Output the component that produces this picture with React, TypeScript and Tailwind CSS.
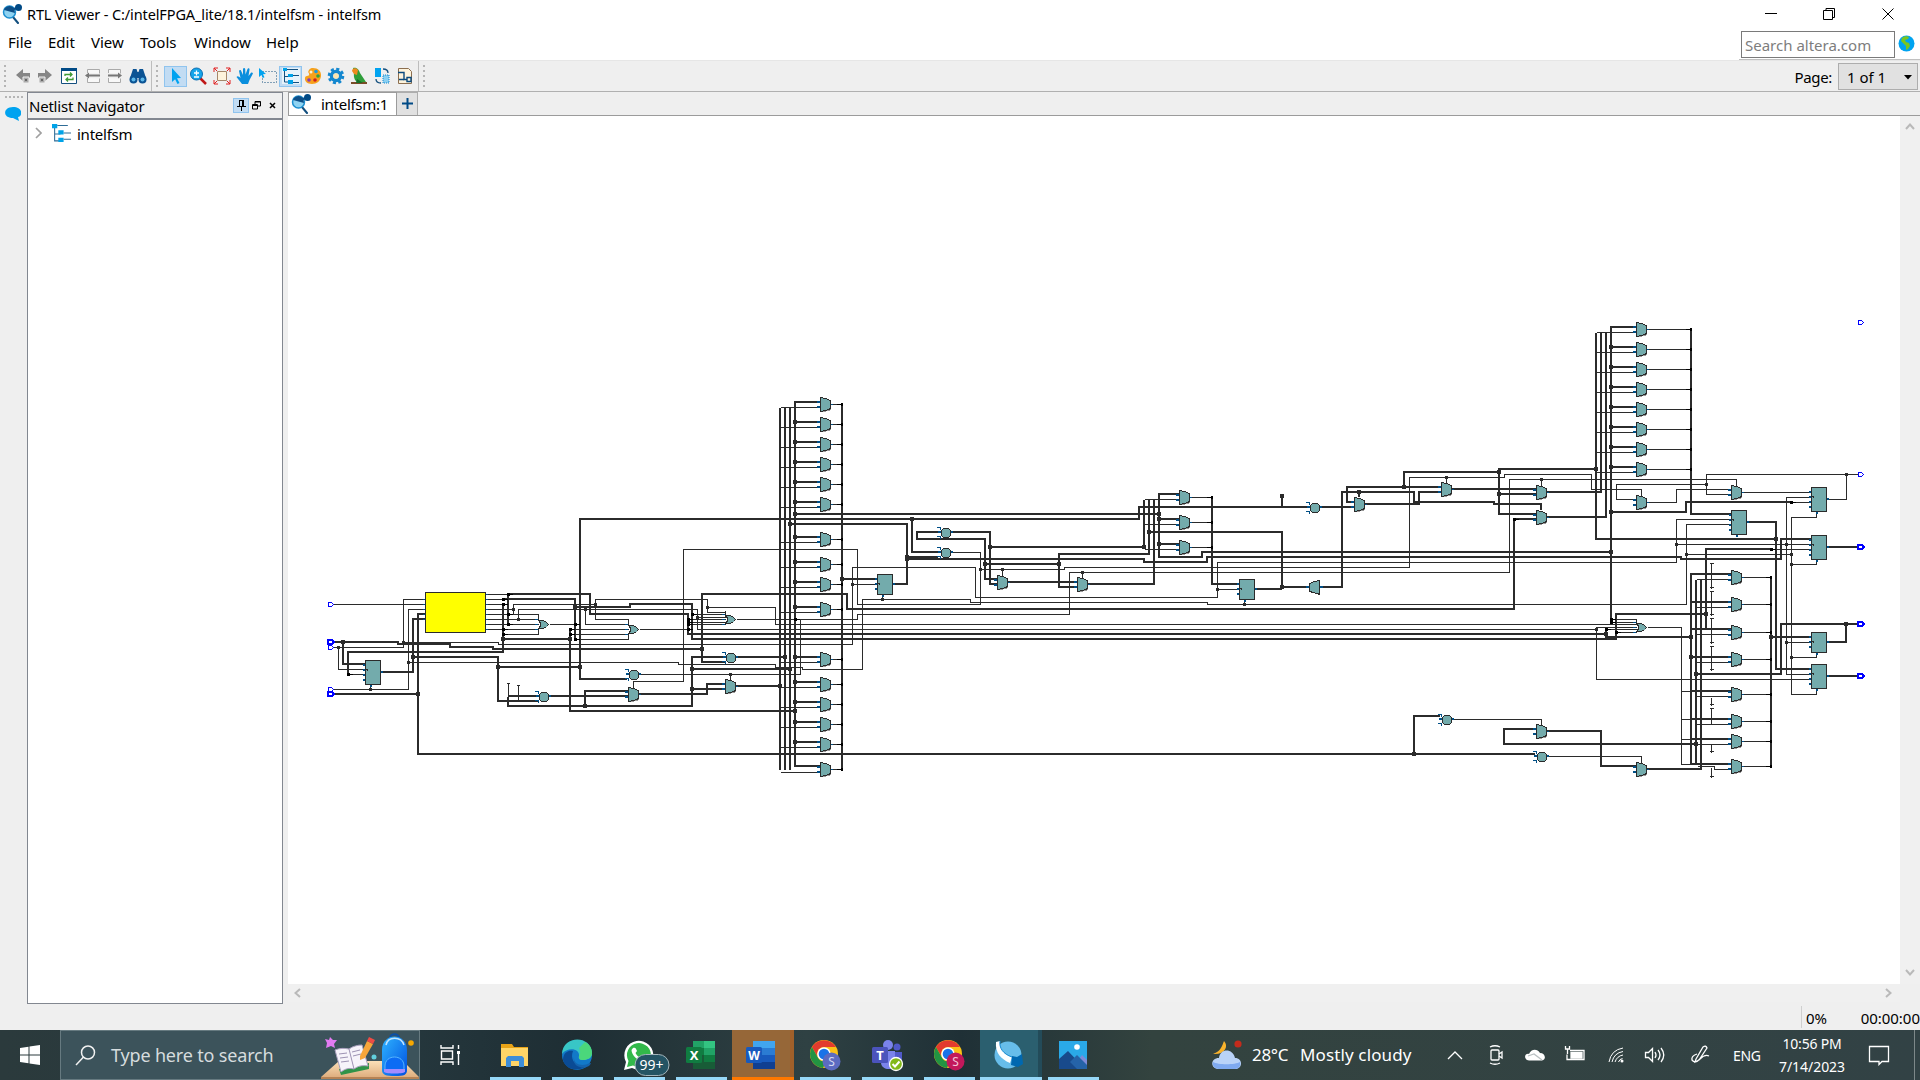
import React from "react";

/* ---------- schematic data ---------- */

const BUS = [
  "M413 657V619H425", "M380 672H413V657", "M425 614H418V754H1535", "M333 694H418",
  "M333 642H398V644H450V647H493V649H702", "M343 642V664H365", "M348 674V652H503V604",
  "M508 594H590V614H688V634H1606", "M503 599H575V639", "M575 607H630V604H692V639H1616V614H1706",
  "M508 594V624", "M503 639H570", "M570 628V711H795", "M413 657H498V701H538", "M498 667H580",
  "M627 679H580V519H1139V507H1308", "M508 697V706H692V657H725", "M508 696H538", "M549 696H628",
  "M585 706V691H628", "M692 669H790", "M692 689H725", "M639 694H707V684H725",
  "M725 662H702V594H847V609H1514V519H1536", "M736 657H785", "M736 686H780",
  "M780 408V770", "M785 408V770", "M790 408V770", "M820 402H795V766H820", "M842 403V771",
  "M795 514H1159", "M790 524H907V584H894", "M907 557H938",
  "M907 559H1144V562H1207V557H1681V559H1781V539H1811", "M842 579H876", "M912 519V552H938",
  "M938 532H917V539H985V579H997", "M985 564H1059", "M1149 500V554H1059V587H1077",
  "M951 532H990V584H997", "M990 547H1144V500", "M1008 582H1077", "M1088 584H1154V500",
  "M1179 494H1159V557H1202V552H1611", "M1159 519H1179", "M1159 544H1179",
  "M1149 532H1282V587", "M1255 589H1282", "M1282 587H1308", "M1212 496V584H1239", "M1282 496V506",
  "M1320 507H1353", "M1320 587H1342V492H1414V502H1494V504H1541V510", "M1359 492V497",
  "M1353 502H1347V487H1441", "M1404 487V472H1499V469H1596", "M1365 504H1419V492H1441",
  "M1414 503H1419", "M1452 489H1536", "M1499 469V514H1536", "M1499 494H1536",
  "M1547 492H1601V333", "M1547 517H1606V333", "M1596 333V539H1776", "M1636 327H1611V623",
  "M1691 328V514H1731", "M1611 512H1686V502H1791", "M1771 549H1706V629",
  "M1747 522H1776V669H1811", "M1827 547H1857", "M1827 642H1846V624", "M1857 624H1781V674H1696",
  "M1827 676H1857", "M1731 574H1691V764H1731", "M1696 580V765", "M1771 576V767",
  "M1771 637H1811", "M1691 637H1606V630", "M1606 638H1616", "M1696 744H1504V729H1536",
  "M1414 754V716H1440", "M1547 731H1601V766H1636", "M1647 769H1701V580",
  "M1691 602H1731", "M1691 629H1731", "M1691 657H1731", "M1691 691H1731", "M1691 719H1731", "M1691 739H1731",
];

const NET = [
  "M333 604H425", "M425 599H403V647H333",
  "M403 642H498V644H852V567H975V597H1217V562H1676V519H1731",
  "M852 584H876", "M1217 589H1239", "M425 609H408V689H333",
  "M408 662H678V664H775V667H802V669H862V599H970V602H1207V604H1686V524H1731",
  "M1244 604V599", "M882 599V594", "M370 689V684", "M338 647V669H365", "M348 674H365",
  "M486 594H508", "M486 599H503", "M486 604H503", "M486 609H513", "M486 614H508", "M486 619H538",
  "M486 624H538", "M486 629H538", "M503 634H538",
  "M538 614H513V604H595V599H707V612H725", "M595 604V619H628", "M707 607H775V624H1636",
  "M518 619V609H697V629H1596", "M585 609V624H628", "M697 617H725",
  "M549 624H575", "M570 629H628", "M570 634H628", "M575 639H628", "M639 629H688",
  "M692 614H725", "M688 619H725", "M688 622H725", "M688 624H725", "M736 619H795",
  "M508 683V697", "M518 685V701", "M506 683H509", "M516 685H519",
  "M633 687V681H683V549H857V604H980V552H951",
  "M639 674H800V619H857V614H1069V572H1509V479H1736V486", "M730 674V679",
  "M980 569H1064V567H1409V477H1504V474H1591V489H1641V495", "M1446 477V482",
  "M1002 569V575", "M1082 572V577", "M1541 479V485", "M1144 499H1179", "M1144 524H1179", "M1144 549H1179",
  "M1636 499H1616V484H1706", "M1857 474H1706V494H1731", "M1846 474V499H1827",
  "M1647 502H1676V489H1731", "M1742 492H1811",
  "M1816 512V517H1791V694H1816V689", "M1811 497H1786V674H1811", "M1676 544H1811", "M1686 554H1791",
  "M1791 502H1811", "M1771 549H1811", "M1791 564H1816V559", "M1786 642H1811", "M1791 657H1816V652",
  "M1596 629V679H1811", "M1596 629V627H1636", "M1611 619H1636", "M1611 622H1636", "M1606 629H1636", "M1616 632H1636",
  "M1647 627H1681V764H1691", "M1681 691H1691", "M1681 719H1691", "M1681 739H1691",
  "M1696 579H1731", "M1696 607H1731", "M1696 634H1731", "M1696 662H1731", "M1696 696H1731", "M1696 724H1731", "M1696 744H1731",
  "M1697 766H1714V769H1731", "M1452 719H1541V724", "M1547 756H1641V762",
  "M1711 563V588", "M1711 591V615", "M1711 618V643", "M1711 646V670", "M1711 697V705", "M1711 708V723", "M1711 744V752", "M1711 767V777",
  "M1709 563H1713", "M1709 591H1713", "M1709 618H1713", "M1709 646H1713", "M1709 708H1713",
  "M1709 587H1713", "M1709 614H1713", "M1709 642H1713", "M1709 669H1713", "M1709 704H1713", "M1709 751H1713", "M1709 776H1713",
];

const COL1 = [404, 424, 444, 464, 484, 504, 539, 564, 584, 609, 659, 684, 704, 724, 744, 769];
const COL2 = [497, 522, 547];
const COL3 = [329, 349, 369, 389, 409, 429, 449, 469];
const COL4 = [577, 604, 632, 659, 694, 721, 741, 766];

const MUXES: [number, number][] = [
  ...COL1.map((c) => [820, c - 7] as [number, number]),
  ...COL2.map((c) => [1179, c - 7] as [number, number]),
  ...COL3.map((c) => [1636, c - 7] as [number, number]),
  ...COL4.map((c) => [1731, c - 7] as [number, number]),
  [628, 687], [725, 679], [997, 575], [1077, 577], [1354, 497], [1441, 482], [1536, 485],
  [1536, 510], [1636, 495], [1731, 485], [1536, 724], [1636, 762],
];

const REGS: [number, number, number][] = [
  [365, 660, 25], [877, 574, 21], [1239, 579, 21], [1811, 487, 25], [1731, 510, 25],
  [1811, 535, 25], [1811, 632, 21], [1811, 664, 25],
];

const CIRCLES: [number, number][] = [
  [544, 697], [634, 675], [731, 658], [946, 533], [946, 553], [1315, 508], [1447, 720], [1542, 757],
];

const ORS: [number, number][] = [[538, 624], [628, 629], [725, 619], [1636, 627]];

const BIG_DOTS: [number, number][] = [
  [343, 642], [418, 694], [413, 657], [503, 639], [570, 639], [575, 607], [498, 667], [580, 667], [585, 706],
  [702, 649], [692, 669], [692, 689], [790, 669], [785, 657], [780, 686], [795, 711], [795, 514], [790, 524],
  [842, 579], [912, 519], [907, 557], [907, 559], [985, 564], [990, 547], [1059, 564], [1144, 547],
  [1149, 532], [1159, 514], [1159, 519], [1159, 544], [1282, 587], [1282, 496], [1359, 492], [1404, 487],
  [1499, 472], [1499, 494], [1596, 469], [1611, 512], [1611, 552], [1706, 614], [1776, 539], [1771, 637],
  [1691, 637], [1691, 657], [1696, 674], [1696, 744], [1846, 624], [1606, 634], [1414, 754],
  ...COL1.slice(1, -1).map((c) => [795, c - 2] as [number, number]),
  ...COL3.slice(1).map((c) => [1611, c - 2] as [number, number]),
];

const SMALL_DOTS: [number, number][] = [
  [403, 642], [338, 647], [408, 662], [370, 689], [513, 609], [518, 619], [595, 604], [585, 609], [697, 617],
  [707, 607], [730, 674], [852, 584], [882, 599], [980, 569], [1002, 569], [1082, 572], [1217, 589], [1244, 604],
  [1446, 477], [1541, 479], [1596, 629], [1706, 484], [1676, 544], [1686, 554], [1786, 544], [1786, 642],
  [1791, 554], [1791, 564], [1791, 657], [1846, 474],
];

const BLACK_DOTS: [number, number][] = [
  [348, 674], [508, 594], [503, 599], [503, 604], [508, 614], [508, 624], [503, 629], [503, 634], [570, 629],
  [570, 634], [575, 639], [575, 624], [692, 614], [688, 619], [688, 622], [688, 624], [688, 629], [795, 619],
  [1514, 519], [1611, 619], [1611, 622], [1606, 629], [1616, 632], [1791, 502], [1771, 549],
];

const TAPS: [number, number][] = [
  ...COL1.map((c) => [841, c] as [number, number]),
  ...COL2.map((c) => [1211, c] as [number, number]),
  ...COL3.map((c) => [1690, c] as [number, number]),
  ...COL4.map((c) => [1770, c] as [number, number]),
];

const INK = "#2b2b2b";
const BODY = "#73abac";
const PIN = "#004f86";

function Port({ x, y, bold }: { x: number; y: number; bold?: boolean }) {
  return bold ? (
    <path d={`M${x} ${y - 2}h4l2 2l-2 2h-4z`} fill="#fff" stroke="#00f" strokeWidth="2" />
  ) : (
    <path d={`M${x + 0.5} ${y - 1.5}h3l2 2l-2 2h-3z`} fill="#fff" stroke="#00f" />
  );
}

function Schematic() {
  return (
    <svg className="block" width="1612" height="868" viewBox="288 116 1612 868" shapeRendering="crispEdges">
      <path d={BUS.join("")} fill="none" stroke={INK} strokeWidth="2" />
      <g transform="translate(.5 .5)">
        <path d={NET.join("")} fill="none" stroke={INK} />
        {COL1.map((c) => (
          <path key={c} d={`M780 ${c + 3}H820M831 ${c}H842`} stroke={INK} />
        ))}
        {COL2.map((c) => (
          <path key={c} d={`M1190 ${c}H1212`} stroke={INK} />
        ))}
        {COL3.map((c) => (
          <path key={c} d={`M1596 ${c + 3}H1636M1647 ${c}H1691`} stroke={INK} />
        ))}
        {COL4.map((c) => (
          <path key={c} d={`M1742 ${c}H1771`} stroke={INK} />
        ))}
      </g>
      {COL1.slice(1, -1).map((c) => (
        <path key={c} d={`M795 ${c - 2}H820`} stroke={INK} strokeWidth="2" />
      ))}
      {COL3.slice(1).map((c) => (
        <path key={c} d={`M1611 ${c - 2}H1636`} stroke={INK} strokeWidth="2" />
      ))}
      {BIG_DOTS.map(([x, y], i) => (
        <rect key={i} x={x - 2} y={y - 2} width="4" height="4" fill={INK} />
      ))}
      {SMALL_DOTS.map(([x, y], i) => (
        <rect key={i} x={x - 1} y={y - 1} width="3" height="3" fill={INK} />
      ))}
      {BLACK_DOTS.map(([x, y], i) => (
        <path key={i} d={`M${x - 1} ${y - 1}h3v1h3v1h-3v1h-3z`} fill="#000" />
      ))}
      {TAPS.map(([x, y], i) => (
        <path key={i} d={`M${x} ${y - 1}h2v3h-2v-1h-4v-1h4z`} fill="#000" />
      ))}
      {MUXES.map(([x, y], i) => (
        <g key={i}>
          <path d={`M${x - 3} ${y + 5}h3M${x - 3} ${y + 10}h3`} stroke={PIN} strokeWidth="2" />
          <path d={`M${x + 11} ${y + 7.5}h2`} stroke={PIN} />
          <path d={`M${x + 3} ${y + 14.5}h3M${x + 6} ${y + 13.5}h4M${x + 10} ${y + 12.5}h1`} stroke="#999" />
          <path d={`M${x + 0.5} ${y + 0.5}h1l7 2l2 1.5v7.5l-2 1l-7 2h-1z`} fill={BODY} stroke={INK} />
        </g>
      ))}
      <path d="M1306 587h3M1320 587h3" stroke={PIN} strokeWidth="2" />
      <path d="M1319.500 580.500h-1l-7 2l-2 1.500v7l2 1l7 2h1z" fill={BODY} stroke={INK} />
      {REGS.map(([x, y, h], i) => (
        <g key={i}>
          <path d={`M${x - 2} ${y + 5}h2M${x - 2} ${y + 10}h2M${x - 2} ${y + 15}h2${h > 21 ? `M${x - 2} ${y + 20}h2` : ""}M${x + 5.5} ${y + h}v2M${x + 16} ${y + (h > 21 ? 12 : 10)}h2`} stroke={PIN} strokeWidth="2" />
          <rect x={x + 0.5} y={y + 0.5} width="15" height={h - 1} fill={BODY} stroke={INK} />
          <path d={`M${x + 1} ${y + 9.500}h1v1h1`} fill="none" stroke={INK} />
        </g>
      ))}
      {CIRCLES.map(([x, y], i) => (
        <g key={i}>
          <path d={`M${x - 9} ${y - 5.500}h3v2M${x - 9} ${y + 3.500}h3v2`} fill="none" stroke={PIN} />
          <path d={`M${x - 8} ${y - 1}h3M${x + 5} ${y - 1}h2`} stroke={PIN} strokeWidth="2" />
          <path d={`M${x - 2.500} ${y - 4.500}h5l2 2v5l-2 2h-5l-2-2v-5z`} fill={BODY} stroke={INK} />
        </g>
      ))}
      {ORS.map(([x, y], i) => (
        <g key={i}>
          <path d={`M${x - 3} ${y - 4.500}h3M${x - 3} ${y + 0.500}h3M${x - 3} ${y + 5.500}h3`} stroke={PIN} />
          <path d={`M${x + 0.5} ${y - (i < 2 ? 10 : 8)}v6M${x + 0.5} ${y + 4}v${i < 2 ? 7 : 2}`} stroke={INK} />
          <path d={`M${x + 0.5} ${y - 3.500}h5l3 2l2 2l-2 2l-3 2h-5l1.500-2v-4z`} fill={BODY} stroke={INK} />
        </g>
      ))}
      <rect x="425.5" y="592.5" width="60" height="40" fill="#ff0" stroke={INK} />
      <path d="M486 594.500h2M486 599.500h2M486 604.500h2M486 609.500h2M486 614.500h2M486 619.500h2M486 624.500h2M486 629.500h2M423 599.500h2M423 604.500h2M423 609.500h2M423 614h2M423 619h2" stroke={PIN} />
      <Port x={328} y={604} />
      <Port x={328} y={647} />
      <Port x={328} y={689} />
      <Port x={328} y={642} bold />
      <Port x={328} y={694} bold />
      <Port x={1858} y={322} />
      <Port x={1858} y={474} />
      <Port x={1858} y={547} bold />
      <Port x={1858} y={624} bold />
      <Port x={1858} y={676} bold />
    </svg>
  );
}

/* ---------- application icons ---------- */

function AppIcon() {
  return (
    <svg width="20" height="20" viewBox="0 0 20 20">
      <path d="M11 13l5 6" stroke="#14507f" strokeWidth="2" strokeLinecap="round" />
      <circle cx="7.500" cy="8" r="6" fill="#8fd3f2" stroke="#1c8fd0" strokeWidth="1.500" />
      <path d="M2 6a6 6 0 0 1 10-2l1 5z" fill="#0d4f88" />
      <path d="M10 6l7-3" stroke="#0d4f88" strokeWidth="2" />
      <circle cx="16.500" cy="3.500" r="3.500" fill="#004a86" />
    </svg>
  );
}

function TreeIcon({ s = 18 }: { s?: number }) {
  return (
    <svg width={s} height={s} viewBox="0 0 18 18">
      <path d="M2.500 3v13H8M2.500 9.500H8M5 1.500h10M11 8.500h7M11 14.500h7" fill="none" stroke="#2f6c96" />
      <path d="M0 0h5v4H0zM6 6h5v4H6zM6 13h5v4H6z" fill="#00a3e8" />
    </svg>
  );
}

function Handle() {
  return (
    <div className="flex w-[3px] flex-col gap-[3px]">
      {[0, 1, 2, 3, 4].map((i) => (
        <span key={i} className="size-[2px] bg-[#b5b5b5]" />
      ))}
    </div>
  );
}

function Tool({ children, w = 23, on }: { children: React.ReactNode; w?: number; on?: boolean }) {
  return (
    <div
      className={`flex h-[21px] shrink-0 items-center justify-center ${on ? "border border-[#90c4ee] bg-[#c2dcf3]" : ""}`}
      style={{ width: w }}
    >
      <svg width="18" height="18" viewBox="0 0 18 18">{children}</svg>
    </div>
  );
}

function Toolbar() {
  return (
    <div className="flex h-[31px] items-center border-b border-[#b0b0b0] bg-[#efefef]">
      <div className="flex h-full w-[152px] items-center border-r border-[#bdbdbd] pl-1">
        <Handle />
        <div className="w-[5px]" />
        <Tool w={22}>
          <path d="M2 8l7-6v4h7v5H9v3z" fill="#858585" />
          <path d="M9 10h6v6H9z" fill="#aaa" stroke="#efefef" />
          <path d="M11 12h2v2h-2z" fill="#666" />
        </Tool>
        <Tool w={22}>
          <path d="M16 8L9 2v4H2v5h7v3z" fill="#858585" />
          <path d="M3 10h6v6H3z" fill="#aaa" stroke="#efefef" />
          <path d="M5 12h2v2H5z" fill="#666" />
        </Tool>
        <Tool w={25}>
          <path d="M1.500 1.500h15v15h-15z" fill="#fff" stroke="#14507f" />
          <path d="M1 1h16v3H1z" fill="#004a86" />
          <path d="M5 9V7.500h7M10 5.500l2 2-2 2M13 10.500v2H6M8 10.500l-2 2 2 2" fill="none" stroke="#3f9a35" strokeWidth="1.300" />
        </Tool>
        <Tool w={23}>
          <path d="M3.500 6V2.500h12v4M3.500 11v4.500h12v-4" fill="#f8f8f8" stroke="#aaa" />
          <path d="M1 8.500l4-3v2h11v2H5v2z" fill="#777" />
        </Tool>
        <Tool w={21}>
          <path d="M2.500 6V2.500h12v4M2.500 11v4.500h12v-4" fill="#f8f8f8" stroke="#aaa" />
          <path d="M16 8.500l-4-3v2H2v2h10v2z" fill="#777" />
        </Tool>
        <Tool w={26}>
          <path d="M4 2h3.500l1 3h1l1-3H14l3 9H1z" fill="#0b5394" />
          <circle cx="4.500" cy="12.500" r="4" fill="#0b5394" />
          <circle cx="13.500" cy="12.500" r="4" fill="#0b5394" />
          <circle cx="4.500" cy="12.500" r="2" fill="#5db8ea" />
          <circle cx="13.500" cy="12.500" r="2" fill="#5db8ea" />
        </Tool>
      </div>
      <div className="flex h-full w-[267px] items-center border-r border-[#bdbdbd] pl-1">
        <Handle />
        <div className="w-[5px]" />
        <Tool w={23} on>
          <path d="M5 1l9 10-4 .3 2.500 4.700-2 1-2.400-4.800L5 15z" fill="#00a3f0" />
        </Tool>
        <Tool w={23}>
          <path d="M10 11l6 6" stroke="#c01818" strokeWidth="2.500" />
          <circle cx="6.500" cy="7" r="6" fill="#16a5ea" stroke="#0b6db0" />
          <path d="M6.500 3.500v5M4 6h5M4 10h5" stroke="#fff" strokeWidth="1.300" />
        </Tool>
        <Tool w={23}>
          <path d="M4.500 4.500h9v9h-9z" fill="#fdf3dc" stroke="#a5876b" />
          <path d="M1 5V1h4M1 1l3 3M13 1h4v4M17 1l-3 3M1 13v4h4M1 17l3-3M13 17h4v-4M17 17l-3-3" fill="none" stroke="#e02020" />
        </Tool>
        <Tool w={24}>
          <path d="M6 17c-2-3-4-5-5.500-7 1-1.500 2.500-.5 4 1L3 4c.5-1.500 2-1 2.300.2L7 8V2c.2-1.500 2-1.500 2.200 0L9.500 7.500 11.500 2c.7-1.300 2.300-.7 2 .7L12.500 9l2.500-3.300c1.200-.8 2.400.2 1.700 1.400L13.500 13 12 17z" fill="#0b8fdd" />
        </Tool>
        <Tool w={22}>
          <path d="M3.500 4.500h14v11h-14z" fill="none" stroke="#14507f" strokeDasharray="1 2" />
          <path d="M0 1l7 6-3 .3 1.500 3-1.700.7L2.500 8 0 10z" fill="#00a3f0" />
        </Tool>
        <Tool w={23} on>
          <path d="M0 1h18v16H0z" fill="#e8f3fb" />
          <path d="M2.500 3v12H8M2.500 9.500H8M5 2.500h11M11 8.500h6M11 15.500h6" fill="none" stroke="#14507f" />
          <path d="M1 1h4v3H1zM6 7h5v3H6zM6 13h5v4H6z" fill="#00a3e8" />
        </Tool>
        <Tool w={22}>
          <path d="M9 1c5 0 8.500 3 8 8s-4 8-9 8-7.500-3-7-6 3-1 4-3-2-2 0-5c1-1.500 2-2 4-2z" fill="#f7a11b" />
          <circle cx="12" cy="4.500" r="1.800" fill="#1d9be0" />
          <circle cx="14" cy="9" r="1.800" fill="#31a340" />
          <circle cx="11" cy="13" r="1.800" fill="#d02020" />
          <circle cx="5" cy="13" r="1.800" fill="#8b3bb8" />
          <circle cx="7" cy="5" r="1.500" fill="#fff0cc" />
        </Tool>
        <Tool w={24}>
          <circle cx="9" cy="9" r="6.800" fill="none" stroke="#1387cf" strokeWidth="3" strokeDasharray="3 2.340" />
          <circle cx="9" cy="9" r="4.500" fill="none" stroke="#1387cf" strokeWidth="3.500" />
          <circle cx="9" cy="9" r="2.800" fill="#fbe5b0" />
        </Tool>
        <Tool w={22}>
          <path d="M1 15h16v2H1z" fill="#7a4b28" />
          <path d="M3 1c4-1 6 2 7 5l6 9H7C3 12 4 7 4 5z" fill="#2f9e3a" />
          <path d="M2 4c0-3 4-4 6-1l-1 5-3-1z" fill="#ef8a1d" />
          <path d="M7 12l6 4H6z" fill="#1a6d28" />
        </Tool>
        <Tool w={23}>
          <path d="M2 1h6v9H2z" fill="#00a3f0" />
          <path d="M10 8h6v8h-6z" fill="#8ad0f2" stroke="#1387cf" strokeDasharray="1 1" />
          <path d="M10 2c4 0 5 2 5 4M3 12c0 3 2 4 5 4" fill="none" stroke="#14507f" strokeWidth="1.300" />
        </Tool>
        <Tool w={24}>
          <path d="M2.500 1.500h10l3 3v12h-13z" fill="#fdf3dc" stroke="#8c6f50" />
          <path d="M2 5.500h6v7h3" fill="none" stroke="#0b4a7d" strokeWidth="1.400" />
          <path d="M11 10.500h4v4h-4zM3 12.500h5" fill="none" stroke="#0b4a7d" strokeWidth="1.400" />
        </Tool>
      </div>
      <div className="pl-1">
        <Handle />
      </div>
      <div className="ml-auto flex items-center pr-[2px]">
        <span className="mr-[6px] pt-px text-[15px] leading-5 tracking-[-0.350px]">Page:</span>
        <div className="mt-[1px] flex h-[27px] w-[80px] items-center justify-between border border-[#adadad] bg-[#e1e1e1] pt-px pr-[5px] pl-2 text-[15px]">
          1 of 1
          <svg width="8" height="5" viewBox="0 0 8 5"><path d="M0 0h8L4 4.500z" /></svg>
        </div>
      </div>
    </div>
  );
}

function TitleBar() {
  return (
    <div className="flex h-[28px] items-center bg-white pl-[2px]">
      <div className="mt-[-1px]"><AppIcon /></div>
      <span className="ml-[5px] pt-px text-[14.500px] tracking-[-0.120px] whitespace-nowrap">
        RTL Viewer - C:/intelFPGA_lite/18.1/intelfsm - intelfsm
      </span>
      <svg className="ml-auto" width="155" height="28" viewBox="1765 0 155 28" fill="none" stroke="#000" strokeWidth="1">
        <path d="M1765 13.500h12M1823.500 10.500h9v9h-9zM1826 10V8.500h8.500v9H1833M1882.500 8.500l11 11M1893.500 8.500l-11 11" />
      </svg>
    </div>
  );
}

function MenuBar() {
  return (
    <div className="flex h-[33px] border-b border-[#e6e6e6] bg-white text-[15px]">
      <div className="flex h-[28px] items-center gap-[16px] pl-2 leading-none">
        <span className="w-[24px]">File</span>
        <span className="w-[27px]">Edit</span>
        <span className="w-[33px]">View</span>
        <span className="w-[38px]">Tools</span>
        <span className="w-[56px]">Window</span>
        <span>Help</span>
      </div>
      <div className="ml-auto flex h-[32px] items-start border-b border-[#c0c0c0] pr-[5px] pl-[2px] pt-[3px]">
        <div className="flex h-[27px] w-[154px] items-center border border-[#7a7a7a] bg-white pt-[2px] pl-[3px] text-[15px] text-[#7d7d7d]">
          Search altera.com
        </div>
        <svg className="mt-[4px] ml-[3px]" width="17" height="17" viewBox="0 0 17 17">
          <circle cx="8.500" cy="8.500" r="8" fill="#00a3f0" />
          <path d="M4 3c2-2 5-2 7-1l-1 2-3 1 1 2 3 1 1 3-2 3-2 1 0-4-2-2-3-3z" fill="#7ac51f" />
        </svg>
      </div>
    </div>
  );
}

function Navigator() {
  return (
    <div className="flex w-[256px] flex-col border border-[#828790] bg-white">
      <div className="flex h-[27px] shrink-0 items-center border-b-2 border-[#828790] bg-[#efefef] pr-1 pl-px">
        <span className="pt-px text-[15px] tracking-[-0.220px]">Netlist Navigator</span>
        <div className="-mt-px ml-auto flex items-center">
          <div className="mr-[-1px] flex h-[15px] w-[16px] items-center justify-center border border-[#90c4ee] bg-[#c2dcf3]">
            <svg width="9" height="11" viewBox="0 0 9 11"><path d="M2.500 0v6M2 .5h4.500M6.500 0v6M5.500 0v6M0 6.500h9M4.500 7v4" stroke="#000" fill="none" /></svg>
          </div>
          <svg className="ml-1" width="9" height="9" viewBox="0 0 9 9"><path d="M3 3V.500h5.500V5H6M.500 3.500h5v4.500h-5zM3 1h5.500M.500 4.500h5" stroke="#000" fill="none" /></svg>
          <svg className="ml-[8px] mr-[2px]" width="7" height="7" viewBox="0 0 7 7"><path d="M1 1l5 5M6 1L1 6" stroke="#000" strokeWidth="1.500" /></svg>
        </div>
      </div>
      <div className="flex h-[26px] items-center pl-[7px]">
        <svg width="7" height="12" viewBox="0 0 7 12"><path d="M1 1l5 5-5 5" stroke="#a0a0a0" strokeWidth="1.700" fill="none" /></svg>
        <span className="ml-[10px]"><TreeIcon s={19} /></span>
        <span className="ml-[6px] pt-[2px] text-[15px] tracking-[-0.250px]">intelfsm</span>
      </div>
    </div>
  );
}

function Arrow({ d, w, h }: { d: string; w: number; h: number }) {
  return (
    <svg width={w} height={h} viewBox={`0 0 ${w} ${h}`}>
      <path d={d} fill="none" stroke="#b9b9b9" strokeWidth="2" />
    </svg>
  );
}

function Viewer() {
  return (
    <div className="flex w-[1632px] flex-col">
      <div className="flex h-[24px] border-b border-[#9b9b9b] bg-[#efefef]">
        <div className="-mb-px flex h-[24px] w-[109px] items-center border border-[#9b9b9b] bg-white pl-[2px]">
          <AppIcon />
          <span className="ml-[10px] pt-px text-[15px] tracking-[-0.280px] whitespace-nowrap">intelfsm:1</span>
        </div>
        <div className="flex w-[21px] items-center justify-center border-t border-r border-[#adadad] bg-[#e1e1e1] pb-[2px]">
          <svg width="11" height="11" viewBox="0 0 11 11"><path d="M5.500 0v11M0 5.500h11" stroke="#004a86" strokeWidth="2" /></svg>
        </div>
      </div>
      <div className="flex h-[868px]">
        <div className="w-[1612px] bg-white"><Schematic /></div>
        <div className="flex w-[20px] flex-col items-center justify-between bg-[#f0f0f0] pt-[7px] pb-[8px]">
          <Arrow w={10} h={7} d="M1 6l4-4.500 4 4.500" />
          <Arrow w={10} h={7} d="M1 1l4 4.500L9 1" />
        </div>
      </div>
      <div className="flex h-[18px] w-[1612px] items-center justify-between bg-[#f0f0f0] pr-[8px] pl-[6px]">
        <Arrow w={7} h={10} d="M6 1L1.500 5 6 9" />
        <Arrow w={7} h={10} d="M1 1l4.500 4L1 9" />
      </div>
    </div>
  );
}

/* ---------- taskbar ---------- */

function TaskItem({ children, active, word }: { children?: React.ReactNode; active?: boolean; word?: boolean }) {
  return (
    <div className="flex h-full w-[62px] flex-col items-center">
      <div
        className={`flex h-[47px] items-center justify-center ${
          word ? "w-[62px] border-r-4 border-[#a0602a] bg-[#966738]" : active ? "w-[62px] border-r-4 border-[#234b59] bg-[#2b5f6f]" : "w-[51px]"
        }`}
      >
        <svg className="mt-[2px] shrink-0 overflow-visible" width="32" height="32" viewBox="0 0 32 32">{children}</svg>
      </div>
      <div className={word ? "h-[3px] w-[62px] bg-[#ff7800]" : active ? "h-[3px] w-[62px] bg-[#96d8f8]" : "h-[3px] w-[51px] bg-[#96d8f8]"} />
    </div>
  );
}

function Chrome({ badge, letter }: { badge: string; letter: string }) {
  return (
    <>
      <circle cx="15" cy="15" r="14" fill="#fbc116" />
      <path d="M2.900 8A14 14 0 0 1 27 8H15a7 7 0 0 0-6 10.500z" fill="#e33b2e" />
      <path d="M2.900 8l6 10.500A7 7 0 0 0 17 22l-3 7A14 14 0 0 1 2.900 8z" fill="#229342" />
      <circle cx="15" cy="15" r="6.800" fill="#fff" />
      <circle cx="15" cy="15" r="5.300" fill="#1a73e8" />
      <circle cx="22.500" cy="22.500" r="9" fill={badge} />
      <text x="22.500" y="27" textAnchor="middle" fontSize="12" fill={letter}>S</text>
    </>
  );
}

function Taskbar() {
  return (
    <div className="flex h-[50px] items-center bg-[linear-gradient(90deg,#2b3a3c_0%,#26383e_20%,#1e2e34_30%,#2f4143_42%,#1f3036_50%,#33433f_60%,#324245_100%)] text-white">
      <div className="flex w-[60px] justify-center">
        <svg width="20" height="20" viewBox="0 0 20 20" fill="#fff"><path d="M0 3l8.500-1.200v7.700H0zM9.500 1.600L20 0v9.500H9.500zM0 10.500h8.500v7.700L0 17zM9.500 10.500H20V20L9.500 18.400z" /></svg>
      </div>
      <div className="flex h-[50px] w-[360px] items-center border border-[#667a80] bg-[#3c535b] pl-[14px]">
        <svg width="21" height="21" viewBox="0 0 21 21" fill="none" stroke="#f2f2f2" strokeWidth="1.500"><circle cx="13" cy="7.500" r="6.500" /><path d="M8.500 12L1 20" /></svg>
        <span className="ml-[15px] text-[18px] tracking-[-0.170px] text-[#d6dcde]">Type here to search</span>
        <svg className="ml-auto" width="98" height="48" viewBox="0 0 98 48">
          <defs>
            <linearGradient id="desk" x1="0" y1="0" x2="0" y2="1"><stop offset="0" stopColor="#fbe0b8" /><stop offset="1" stopColor="#dba877" /></linearGradient>
            <linearGradient id="bag" x1="0" y1="0" x2="1" y2="1"><stop offset="0" stopColor="#2fb4ff" /><stop offset="1" stopColor="#0050e0" /></linearGradient>
          </defs>
          <path d="M18 30h64l16 16v2H0v-2z" fill="url(#desk)" />
          <path d="M0 46h98v2H0z" fill="#b78354" />
          <path d="M9 6l3 3 4 0-3 4 1 4-4-2-5 2 1-5-2-4 4 1z" fill="#e27bf2" />
          <path d="M18 38l2 6 28-6V32z" fill="#2f9348" />
          <path d="M14 19c5-2 9-2 14-1 4-3 9-4 13-4l6 21c-6-1-10 0-14 3-4-1-8-1-13 3z" fill="#f6f3fa" stroke="#a9a0bd" />
          <path d="M28 18l5 20M18 23l8-1M19 27l8-1M20 31l8-1M31 21l8-2M32 25l8-2" stroke="#9d92b3" fill="none" />
          <path d="M39 25l7-15 6 3-8 14-5 2z" fill="#f7a63a" />
          <path d="M46 10l2-4 6 3-2 4z" fill="#ee4c45" />
          <circle cx="53" cy="26" r="2.500" fill="#62d0de" />
          <circle cx="90" cy="12" r="2.800" fill="#f7a800" />
          <path d="M69 7c0-5 9-5 9 0" fill="none" stroke="#0a4fa8" strokeWidth="2" />
          <path d="M61 19c0-18 25-18 25 0v20c0 5-3 6-12 6s-13-1-13-6z" fill="url(#bag)" />
          <path d="M65 14c2-9 15-9 18 0" fill="none" stroke="#bfe4ff" strokeWidth="1.500" />
          <path d="M64 35c0-12 19-12 19 0v4H64z" fill="#0c6cf4" stroke="#57b6ff" />
          <path d="M63 38h21v3c-3 2-18 2-21 0z" fill="#a28cff" />
        </svg>
      </div>
      <div className="flex w-[64px] pl-[20px]">
        <svg className="shrink-0" width="20" height="20" viewBox="0 0 20 20" fill="none" stroke="#fff" strokeWidth="1.400"><path d="M1 0v3h12V0M1 20v-3h12v3M1.500 6h11v8h-11zM18.500 0v4M18.500 9v11" /><path d="M17 6h3v3h-3z" fill="#fff" stroke="none" /></svg>
      </div>
      <TaskItem>
        <path d="M2 5h11l2 3h14v19H2z" fill="#e8a317" /><path d="M2 9h27v18H2z" fill="#ffd567" /><path d="M7 28v-9l2-2h14l2 2v9h-5v-6h-8v6z" fill="#3e8ed8" />
      </TaskItem>
      <TaskItem>
        <circle cx="16" cy="16" r="15" fill="#1279c8" />
        <path d="M1 15C2-4 30-4 31 14c0 5-4 7-9 7-3 0-5-1-4-4 1-8-12-9-17-2z" fill="#38c6c6" />
        <path d="M24 3c6 3 7 8 7 11 0 5-5 7-9 7-4 0-4-2-4-4 2-3 1-6 0-8z" fill="#4bd77b" />
        <path d="M2 21c0-8 6-10 10-9-3 7 1 15 10 15 3 0 5-1 7-3-7 9-24 9-27-3z" fill="#0a4b95" />
        <path d="M13 18c-1 8 9 10 16 6 1 0 1 0 0 2-3 3-8 3-10 2-5-1-7-5-6-10z" fill="#1464ae" />
      </TaskItem>
      <TaskItem>
        <path d="M1 31l2-8A14.500 14.500 0 1 1 9 29z" fill="#fff" />
        <path d="M4 28l1.500-6A12 12 0 1 1 10 26.500z" fill="#32b84a" />
        <path d="M10 9c2-1 3 0 4 3l-1.500 2c1 2 3 4 5 5l2-2c3 1 4 2 3 4-3 4-14-3-14-10z" fill="#fff" />
        <rect x="12" y="15.500" width="34" height="21" rx="10.500" fill="#245464" stroke="#a3b5bb" />
        <text x="28.500" y="31" textAnchor="middle" fontSize="14" fill="#fff">99+</text>
      </TaskItem>
      <TaskItem>
        <path d="M8 2h11v8H8z" fill="#21a366" /><path d="M19 2h11v8H19z" fill="#33c481" /><path d="M8 9h11v7H8z" fill="#107c41" /><path d="M19 9h11v7H19z" fill="#21a366" /><path d="M8 16h22v14H8z" fill="#185c37" /><path d="M19 16h11v7H19z" fill="#107c41" />
        <rect x="1" y="8" width="16" height="16" rx="1.500" fill="#107c41" /><text x="9" y="20.500" fontSize="13" fontWeight="700" textAnchor="middle" fill="#fff">X</text>
      </TaskItem>
      <TaskItem word>
        <path d="M8 2h22v8H8z" fill="#41a5ee" /><path d="M8 9h22v7H8z" fill="#2b7cd3" /><path d="M8 16h22v7H8z" fill="#185abd" /><path d="M8 23h22v7H8z" fill="#103f91" />
        <rect x="1" y="8" width="16" height="16" rx="1.500" fill="#185abd" /><text x="9" y="20.500" fontSize="12" fontWeight="700" textAnchor="middle" fill="#fff">W</text>
      </TaskItem>
      <TaskItem><Chrome badge="#5c6bc0" letter="#d5daf2" /></TaskItem>
      <TaskItem>
        <circle cx="17" cy="6" r="5" fill="#7b83eb" /><circle cx="26" cy="8" r="3.500" fill="#5059c9" /><path d="M20 13h11v9c0 6-9 6-11 1z" fill="#5059c9" /><path d="M10 12h14v12c0 8-13 8-14 0z" fill="#7b83eb" />
        <rect x="1" y="8" width="16" height="16" rx="1.500" fill="#4b53bc" /><text x="9" y="21" fontSize="13" fontWeight="700" textAnchor="middle" fill="#fff">T</text>
        <circle cx="25" cy="25" r="6.500" fill="#83b81a" stroke="#fff" strokeWidth="1.300" /><path d="M21.500 25l2.500 2.500 4.500-5" fill="none" stroke="#fff" strokeWidth="2" />
      </TaskItem>
      <TaskItem><Chrome badge="#c2185b" letter="#f4c4d7" /></TaskItem>
      <TaskItem active>
        <circle cx="15" cy="16" r="13.500" fill="#67bdea" />
        <path d="M3 3C2 14 8 20 17 24l2-6C10 15 6 9 7 2z" fill="#fff" />
        <path d="M7 2C6 9 10 15 19 18" fill="none" stroke="#1387cf" />
        <path d="M19 17l5 1 5-3 1 10-5 3-7-2z" fill="#0068b0" />
      </TaskItem>
      <TaskItem>
        <path d="M2 2h28v28H2z" fill="#2aa9e8" /><path d="M15 30l10-14 5 5v9z" fill="#7d8bd8" /><circle cx="20" cy="8" r="2.800" fill="#fff" /><path d="M2 20l9-8 17 18H2z" fill="#184a8b" /><path d="M13 23l7-7 10 10v4H20z" fill="#2563a8" />
      </TaskItem>
      <div className="ml-auto flex w-[712px] items-center">
        <svg className="ml-[3px]" width="32" height="32" viewBox="0 0 32 32">
          <path d="M13 2c5 5 1 14-11 13 8-3 9-8 11-13z" fill="#f8b22c" />
          <circle cx="27" cy="5" r="3.600" fill="#c42b1c" />
          <path d="M8 30c-9 0-9-11 0-11 1-10 14-10 16 0 8 0 8 11 0 11z" fill="#b9d3f8" />
          <path d="M8 30c-5 0-7-4-6-7 5 3 22 3 27 0 1 4-1 7-5 7z" fill="#7faaf0" />
        </svg>
        <span className="ml-[9px] w-[48px] text-[17px] tracking-[-0.300px]">28°C</span>
        <span className="w-[146px] text-[17px] tracking-[0.130px] whitespace-nowrap">Mostly cloudy</span>
        <svg className="shrink-0" width="270" height="24" viewBox="1446 1044 270 24" fill="none" stroke="#fff" strokeWidth="1.300">
          <path d="M1448 1060l7-7 7 7" />
          <rect x="1491" y="1051" width="8" height="10" rx="1" /><path d="M1499 1055l3-2v6l-3-2M1490 1048q5-2.500 10 0M1490 1064q5 2.500 10 0" />
          <path d="M1527 1061c-4-3-1-7 2-6 2-5 8-6 11-1 5 0 7 6 2 7.500h-13z" fill="#fff" stroke="none" />
          <path d="M1528 1057l6-2 8 6" stroke="#b9c0c2" />
          <path d="M1570 1051.500h14v9h-17v-5" /><path d="M1571 1053.500h11v5.500h-11z" fill="#fff" /><path d="M1565.500 1047v3h4v-3M1567.500 1050v5" />
          <path d="M1609 1063q2-12 14-14M1612 1063q2-9 11-10.500M1615 1063q2-6 8-7M1618.500 1063q1-3 4-3.500" strokeWidth="1" /><circle cx="1622" cy="1062" r="1.500" fill="#fff" stroke="none" />
          <path d="M1645.500 1053.500h3l4-4v13l-4-4h-3zM1655 1053q2 3 0 6M1658 1051q4 5 0 10M1661 1049q5.500 7 0 14" />
          <path d="M1696 1060l7-12q3-2 4 1l-8 12-4 2zM1697 1055q-6 2-5 6 3 4 8-1t9-3" />
        </svg>
        <span className="ml-[17px] w-[40px] text-[14px] tracking-[-0.300px]">ENG</span>
        <div className="flex w-[78px] flex-col items-center text-[14px] leading-[23px] tracking-[-0.200px] whitespace-nowrap">
          <span>10:56 PM</span>
          <span className="tracking-[-0.050px]">7/14/2023</span>
        </div>
        <svg className="ml-[17px] shrink-0" width="22" height="22" viewBox="0 0 22 22" fill="none" stroke="#fff" strokeWidth="1.300"><path d="M1.500 2.500h19v15h-6.500l-3 3v-3h-9.500z" /></svg>
        <div className="ml-auto mr-[5px] h-[50px] w-px bg-[#7d8889]" />
      </div>
    </div>
  );
}

export default function App() {
  return (
    <div className="flex h-[1080px] w-[1920px] flex-col overflow-hidden bg-[#efefef] font-['Noto_Sans','Open_Sans',sans-serif] text-black">
      <TitleBar />
      <MenuBar />
      <Toolbar />
      <div className="flex h-[912px]">
        <div className="flex w-[27px] flex-col items-center pt-[4px]">
          <div className="flex gap-[2px]">
            {[0, 1, 2, 3, 4].map((i) => (
              <span key={i} className="size-[2px] bg-[#b5b5b5]" />
            ))}
          </div>
          <svg className="mt-[9px] mr-[2px]" width="16" height="14" viewBox="0 0 16 14"><path d="M8 0c10 0 10 9 5 10l1 4-6-3C-3 11-2 0 8 0z" fill="#00a3f0" /></svg>
        </div>
        <Navigator />
        <div className="w-[5px]" />
        <Viewer />
      </div>
      <div className="flex h-[26px] items-center justify-end text-[15px]">
        <div className="flex h-[22px] w-[119px] items-center justify-between border-l border-[#cfcfcf] pt-[3px] pl-[4px]">
          <span>0%</span>
          <span className="tracking-[-0.020px]">00:00:00</span>
        </div>
      </div>
      <Taskbar />
    </div>
  );
}
